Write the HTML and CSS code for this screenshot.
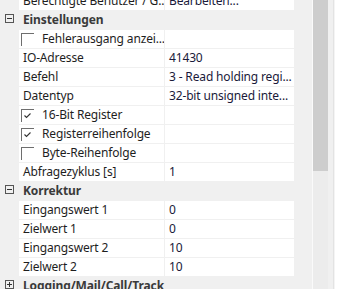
FILE: index.html
```html
<!DOCTYPE html>
<html>
<head>
<meta charset="utf-8">
<link rel="stylesheet" href="styles.css">
</head>
<body>
<div class="pane">
  <div class="grid">
    <div class="list">
      <div class="row prop"><span class="gut"></span><span class="name">Berechtigte Benutzer / G...</span><span class="sep"></span><span class="val">Bearbeiten...</span></div>
      <div class="row cat"><span class="gut"><span class="tog minus"></span></span><span class="cname">Einstellungen</span></div>
      <div class="row prop"><span class="gut"></span><span class="name chk"><span class="box"></span>Fehlerausgang anzei...</span><span class="sep"></span><span class="val"></span></div>
      <div class="row prop"><span class="gut"></span><span class="name">IO-Adresse</span><span class="sep"></span><span class="val">41430</span></div>
      <div class="row prop"><span class="gut"></span><span class="name">Befehl</span><span class="sep"></span><span class="val">3 - Read holding regi...</span></div>
      <div class="row prop"><span class="gut"></span><span class="name">Datentyp</span><span class="sep"></span><span class="val">32-bit unsigned inte...</span></div>
      <div class="row prop"><span class="gut"></span><span class="name chk"><span class="box"><svg width="13" height="13" viewBox="0 0 13 13"><path d="M3.5 6.5 L5.5 8.5 L9.5 4.5" fill="none" stroke="#333" stroke-width="1.1"/></svg></span>16-Bit Register</span><span class="sep"></span><span class="val"></span></div>
      <div class="row prop"><span class="gut"></span><span class="name chk"><span class="box"><svg width="13" height="13" viewBox="0 0 13 13"><path d="M3.5 6.5 L5.5 8.5 L9.5 4.5" fill="none" stroke="#333" stroke-width="1.1"/></svg></span>Registerreihenfolge</span><span class="sep"></span><span class="val"></span></div>
      <div class="row prop"><span class="gut"></span><span class="name chk"><span class="box"></span>Byte-Reihenfolge</span><span class="sep"></span><span class="val"></span></div>
      <div class="row prop"><span class="gut"></span><span class="name">Abfragezyklus [s]</span><span class="sep"></span><span class="val">1</span></div>
      <div class="row cat"><span class="gut"><span class="tog minus"></span></span><span class="cname">Korrektur</span></div>
      <div class="row prop"><span class="gut"></span><span class="name">Eingangswert 1</span><span class="sep"></span><span class="val">0</span></div>
      <div class="row prop"><span class="gut"></span><span class="name">Zielwert 1</span><span class="sep"></span><span class="val">0</span></div>
      <div class="row prop"><span class="gut"></span><span class="name">Eingangswert 2</span><span class="sep"></span><span class="val">10</span></div>
      <div class="row prop"><span class="gut"></span><span class="name">Zielwert 2</span><span class="sep"></span><span class="val">10</span></div>
      <div class="row cat"><span class="gut"><span class="tog plus"></span></span><span class="cname">Logging/Mail/Call/Track</span></div>
    </div>
  </div>
  <div class="edge"></div>
  <div class="scroll"><div class="thumb"></div></div>
  <div class="gap"></div>
  <div class="line"></div>
  <div class="after"></div>
</div>
</body>
</html>
```
FILE: styles.css
```css
html, body {
  margin: 0;
  padding: 0;
  background: #ffffff;
}
body {
  width: 351px;
  height: 289px;
  overflow: hidden;
  font-family: "Noto Sans", "Open Sans", sans-serif;
  font-size: 12px;
  color: #1e1e1e;
}
.pane {
  display: flex;
  height: 289px;
}
.grid {
  width: 312px;
  background: #f0f0f0;
  overflow: hidden;
}
.list {
  margin-top: -9px;
  display: flex;
  flex-direction: column;
}
.row {
  height: 19px;
  display: flex;
  box-sizing: border-box;
}
.prop {
  padding-top: 1px;
}
.gut {
  width: 19px;
  flex: none;
  position: relative;
}
.name {
  width: 145px;
  flex: none;
  background: #ffffff;
  padding-left: 4px;
  box-sizing: border-box;
  white-space: nowrap;
  overflow: hidden;
  line-height: 18px;
  display: flex;
  align-items: center;
  letter-spacing: -0.15px;
}
.sep {
  width: 1px;
  flex: none;
}
.val {
  width: 129px;
  flex: none;
  background: #ffffff;
  padding-left: 4px;
  box-sizing: border-box;
  white-space: nowrap;
  overflow: hidden;
  line-height: 18px;
  color: #1a1a3a;
  letter-spacing: -0.15px;
}
.chk {
  padding-left: 2px;
}
.box {
  width: 13px;
  height: 13px;
  flex: none;
  box-sizing: border-box;
  border-top: 1px solid #6e6e6e;
  border-left: 1px solid #6e6e6e;
  margin-right: 8px;
  position: relative;
}
.box svg {
  position: absolute;
  left: -1px;
  top: -1px;
}
.cname {
  padding-left: 4px;
  font-weight: bold;
  color: #3a3a3a;
  line-height: 19px;
  white-space: nowrap;
  letter-spacing: -0.1px;
}
.tog {
  position: absolute;
  left: 5px;
  top: 4px;
  width: 9px;
  height: 9px;
  box-sizing: border-box;
  border: 1px solid #555555;
}
.tog::before {
  content: "";
  position: absolute;
  left: 1px;
  top: 3px;
  width: 5px;
  height: 1px;
  background: #333333;
}
.plus::after {
  content: "";
  position: absolute;
  left: 3px;
  top: 1px;
  width: 1px;
  height: 5px;
  background: #333333;
}
.edge {
  width: 1px;
  background: #fafafa;
}
.scroll {
  width: 15px;
  background: #ececec;
}
.thumb {
  height: 171px;
  background: #cdcdcd;
}
.gap {
  width: 5px;
  background: #f0f0f0;
}
.line {
  width: 1px;
  background: #e3e3e3;
}
.after {
  width: 1px;
  background: #f4f4f4;
}
```
